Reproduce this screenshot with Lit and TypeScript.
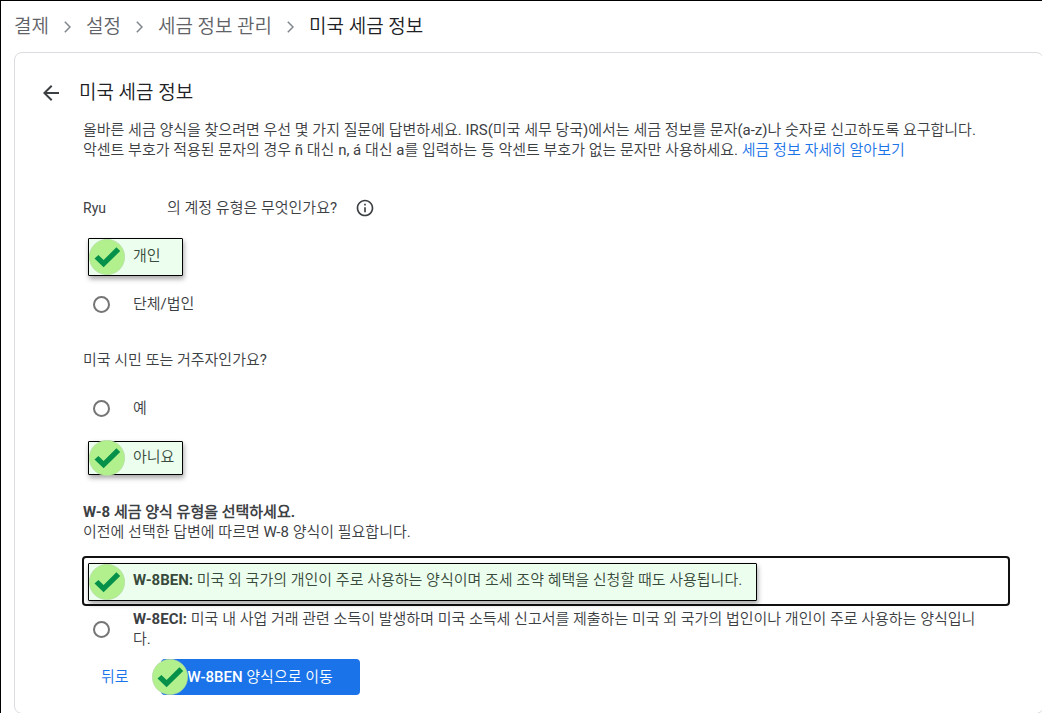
import { LitElement, html, css, nothing } from "lit";
import { customElement, property } from "lit/decorators.js";

const tick = html`<svg class="tick" viewBox="0 0 36 36" aria-hidden="true">
  <circle cx="18" cy="18" r="17.7" fill="#b2f08e" stroke="#b4d5a4" stroke-width="0.6" />
  <path d="M5.5 19.6l3.9-3.7 5.2 5.2L27.4 8.3l3.8 3.7L14.6 28.3z" fill="#05914a" />
</svg>`;

const chevron = html`<svg class="chevron" viewBox="0 0 7 12" aria-hidden="true">
  <path d="M0.8 0.8L6 6L0.8 11.2" fill="none" stroke="#80868b" stroke-width="1.5" />
</svg>`;

const shared = css`
  * {
    box-sizing: border-box;
  }
  .tick {
    display: block;
    width: 36px;
    height: 36px;
  }
`;

@customElement("radio-option")
export class RadioOption extends LitElement {
  @property() group = "";
  @property() value = "";
  @property() term = "";
  @property() label = "";
  @property({ type: Boolean, reflect: true }) marked = false;
  @property({ reflect: true }) size = "";

  static styles = [
    shared,
    css`
      :host {
        display: flex;
        align-items: center;
        min-height: 48px;
      }
      label {
        display: flex;
        align-items: center;
        gap: 23px;
        padding: 0 24px 0 10px;
        color: #3c4043;
        cursor: pointer;
      }
      input {
        appearance: none;
        flex: none;
        width: 17px;
        height: 17px;
        margin: 0;
        border: 2px solid #757575;
        border-radius: 50%;
        background: #fff;
      }
      b {
        font-weight: 700;
      }
      :host([marked]) label {
        gap: 8px;
        min-width: 95px;
        height: 38px;
        margin: 2px 0 0 5px;
        padding: 0 6px 0 0;
        border: 1px solid #000;
        border-radius: 1px;
        background: #ecffee;
        box-shadow: 1px 3px 5px rgba(0, 0, 0, 0.35);
        color: #384a3c;
      }
      :host([marked]) .text {
        padding-bottom: 2px;
      }
      :host([marked][size="compact"]) label {
        height: 34px;
        margin-top: 4px;
      }
      :host([size="form"]) {
        min-height: 46px;
      }
      :host([marked][size="form"]) label {
        padding-right: 14px;
      }
      :host([marked][size="form"]) .text {
        padding-bottom: 5px;
      }
      .choice {
        display: grid;
        place-items: center;
        flex: none;
      }
      .choice > * {
        grid-area: 1 / 1;
      }
    `,
  ];

  render() {
    return html`<label>
      <span class="choice">
        <input type="radio" name=${this.group} .value=${this.value} .checked=${this.marked} />
        ${this.marked ? tick : nothing}
      </span>
      <span class="text">${this.term ? html`<b>${this.term}</b> ` : nothing}${this.label}</span>
    </label>`;
  }
}

@customElement("app-root")
export class AppRoot extends LitElement {
  static styles = [
    shared,
    css`
      :host {
        display: flex;
        flex-direction: column;
        box-sizing: border-box;
        min-height: 100vh;
        overflow: hidden;
        border-top: 1px solid #000;
        border-left: 1px solid #000;
        background: #fff;
        color: #3c4043;
        font: 15px/20px Roboto, "Noto Sans CJK KR DemiLight", "Noto Sans CJK KR", sans-serif;
      }
      a {
        color: #1a73e8;
        text-decoration: none;
      }
      .crumbs {
        display: flex;
        align-items: center;
        gap: 15px;
        height: 51px;
        padding-left: 13px;
        font-size: 19px;
        font-weight: 300;
        color: #202124;
      }
      .crumbs a {
        color: #5f6368;
      }
      .chevron {
        width: 7px;
        height: 12px;
      }
      .card {
        flex: 1;
        margin: 0 -2px -1px 13px;
        padding: 24px 33px 18px 24px;
        border: 1px solid #dadce0;
        border-radius: 8px;
      }
      header {
        display: flex;
        align-items: center;
        gap: 16px;
        height: 32px;
      }
      h1 {
        margin: 0;
        font-size: 19px;
        font-weight: 300;
        line-height: 28px;
        color: #202124;
      }
      button {
        font: inherit;
        cursor: pointer;
        border: 0;
        padding: 0;
        background: none;
      }
      header svg {
        display: block;
        width: 24px;
        height: 24px;
        fill: #3c4043;
      }
      .body {
        padding: 11px 0 0 44px;
      }
      p,
      h2 {
        margin: 0;
        font-size: 15px;
      }
      fieldset {
        min-width: 0;
        margin: 0;
        padding: 0;
        border: 0;
      }
      legend {
        display: flex;
        align-items: center;
        height: 20px;
        padding: 0;
        margin-bottom: 14px;
      }
      .account {
        margin-top: 38px;
      }
      .citizen {
        margin-top: 22px;
      }
      .form-type {
        margin-top: 22px;
      }
      .name {
        min-width: 84px;
        font-size: 14px;
      }
      .info {
        margin-left: 18px;
      }
      .info svg {
        display: block;
        width: 20px;
        height: 20px;
        fill: #3c4043;
      }
      .focus {
        margin: 14px 0 0 -1px;
        border: 2px solid #111;
        border-radius: 4px;
      }
      .focus radio-option {
        margin-left: -1px;
      }
      .actions {
        display: flex;
        align-items: center;
        gap: 32px;
        margin-top: 7px;
        padding-left: 18px;
      }
      .back {
        color: #1a73e8;
      }
      .go {
        position: relative;
        height: 36px;
        padding: 0 27px;
        border-radius: 4px;
        background: #1a73e8;
        color: #fff;
        font-weight: 500;
      }
      .go .tick {
        position: absolute;
        top: 0;
        left: -9px;
      }
    `,
  ];

  render() {
    return html`
      <nav class="crumbs">
        <a href="#">결제</a>${chevron}<a href="#">설정</a>${chevron}<a href="#">세금 정보 관리</a>${chevron}<span>미국 세금 정보</span>
      </nav>
      <main class="card">
        <header>
          <button type="button" aria-label="뒤로">
            <svg viewBox="0 0 24 24"><path d="M20 11H7.83l5.59-5.59L12 4l-8 8 8 8 1.41-1.41L7.83 13H20v-2z" /></svg>
          </button>
          <h1>미국 세금 정보</h1>
        </header>
        <div class="body">
          <p>
            올바른 세금 양식을 찾으려면 우선 몇 가지 질문에 답변하세요. IRS(미국 세무 당국)에서는 세금 정보를 문자(a-z)나 숫자로 신고하도록 요구합니다.<br />
            악센트 부호가 적용된 문자의 경우 ñ 대신 n, á 대신 a를 입력하는 등 악센트 부호가 없는 문자만 사용하세요.
            <a href="#">세금 정보 자세히 알아보기</a>
          </p>
          <fieldset class="account">
            <legend>
              <span class="name">Ryu</span><span>의 계정 유형은 무엇인가요?</span>
              <button class="info" type="button" aria-label="도움말">
                <svg viewBox="0 0 24 24">
                  <path d="M11 7h2v2h-2zm0 4h2v6h-2zm1-9C6.48 2 2 6.48 2 12s4.48 10 10 10 10-4.48 10-10S17.52 2 12 2zm0 18c-4.41 0-8-3.59-8-8s3.59-8 8-8 8 3.59 8 8-3.59 8-8 8z" />
                </svg>
              </button>
            </legend>
            <radio-option group="account" value="individual" label="개인" marked></radio-option>
            <radio-option group="account" value="entity" label="단체/법인"></radio-option>
          </fieldset>
          <fieldset class="citizen">
            <legend>미국 시민 또는 거주자인가요?</legend>
            <radio-option group="citizen" value="yes" label="예"></radio-option>
            <radio-option group="citizen" value="no" label="아니요" marked size="compact"></radio-option>
          </fieldset>
          <section class="form-type">
            <h2>W-8 세금 양식 유형을 선택하세요.</h2>
            <p>이전에 선택한 답변에 따르면 W-8 양식이 필요합니다.</p>
            <div class="focus">
              <radio-option
                group="form"
                value="w8ben"
                term="W-8BEN:"
                label="미국 외 국가의 개인이 주로 사용하는 양식이며 조세 조약 혜택을 신청할 때도 사용됩니다."
                marked
                size="form"
              ></radio-option>
            </div>
            <radio-option
              group="form"
              value="w8eci"
              term="W-8ECI:"
              label="미국 내 사업 거래 관련 소득이 발생하며 미국 소득세 신고서를 제출하는 미국 외 국가의 법인이나 개인이 주로 사용하는 양식입니다."
              size="form"
            ></radio-option>
          </section>
          <div class="actions">
            <button class="back" type="button">뒤로</button>
            <button class="go" type="button">${tick}W-8BEN 양식으로 이동</button>
          </div>
        </div>
      </main>
    `;
  }
}
